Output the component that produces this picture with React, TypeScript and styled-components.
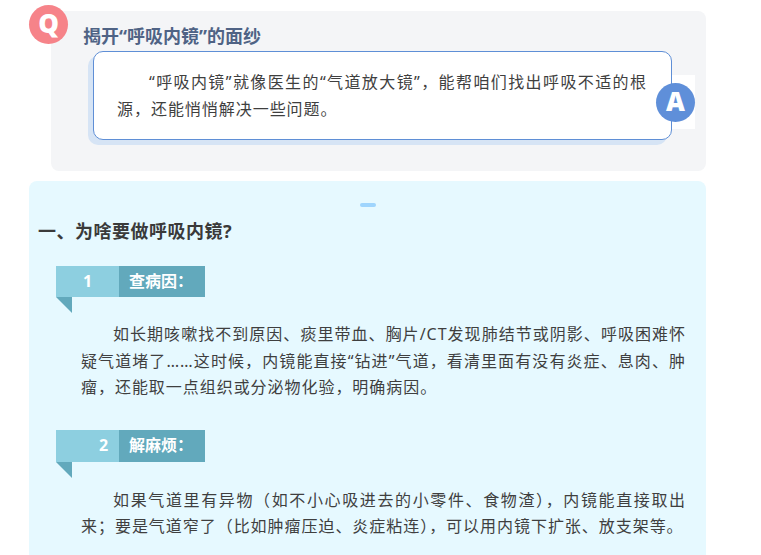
import React from 'react'
import styled, { createGlobalStyle } from 'styled-components'

const Global = createGlobalStyle`
  html, body {
    margin: 0;
    padding: 0;
    background: #fff;
    height: 555px;
    overflow: hidden;
  }
  body {
    font-family: "Noto Sans", "Noto Sans CJK SC", sans-serif;
  }
`

const Page = styled.div`
  width: 761px;
  height: 555px;
  overflow: hidden;
  padding: 11px 55px 0 29px;
  box-sizing: border-box;
  display: flex;
  flex-direction: column;
  gap: 10px;
`

const QuestionCard = styled.section`
  position: relative;
  flex-shrink: 0;
  margin-left: 22px;
  height: 160px;
  padding: 13px 34px 0 32px;
  box-sizing: border-box;
  background: #f4f5f7;
  border-radius: 8px;
`

const Badge = styled.div<{ $bg: string }>`
  position: absolute;
  width: 39px;
  height: 39px;
  border-radius: 50%;
  background: ${p => p.$bg};
  color: #fff;
  font-family: "Open Sans", "Liberation Sans", sans-serif;
  font-weight: 800;
  font-size: 26px;
  line-height: 36px;
  text-align: center;
`

const QBadge = styled(Badge)`
  left: -22px;
  top: -6px;
`

const ABadgeBack = styled.div`
  position: absolute;
  right: 11px;
  top: 64px;
  width: 23px;
  height: 54px;
  background: #fff;
`

const ABadge = styled(Badge)`
  right: 11px;
  top: 72px;
`

const QuestionTitle = styled.h2`
  margin: 0 0 2px;
  font-size: 18px;
  line-height: 25px;
  font-weight: 700;
  color: #4f6385;
`

const AnswerBox = styled.div`
  margin-left: 10px;
  height: 89px;
  box-sizing: border-box;
  padding: 17px 24px 0 23px;
  background: #fff;
  border: 1px solid #5f8fd6;
  border-radius: 10px;
  box-shadow: -5px 5px 0 #d6e4f5;
`

const Para = styled.p`
  margin: 0;
  font-size: 16px;
  line-height: 26.6px;
  letter-spacing: 0.96px;
  text-indent: 32px;
  text-align: justify;
  color: #3f3f3f;
`

const InfoCard = styled.section`
  flex: 1;
  padding: 22px 20px 0 9px;
  background: #e6f9ff;
  border-radius: 8px 8px 0 0;
`

const Pill = styled.div`
  width: 16px;
  height: 4px;
  margin: 0 auto 11px;
  position: relative;
  left: 5.5px;
  border-radius: 2px;
  background: #9fd5fd;
`

const Heading = styled.h3`
  margin: 0 0 22px;
  font-size: 18px;
  line-height: 26px;
  letter-spacing: 0.5px;
  font-weight: 700;
  color: #3a3a3a;
`

const Ribbon = styled.div<{ $height: number; $gap: number }>`
  position: relative;
  display: flex;
  width: 149px;
  height: ${p => p.$height}px;
  margin-left: 18px;
  margin-bottom: ${p => p.$gap}px;
  color: #fff;
  font-weight: 700;
  font-size: 16px;
  line-height: ${p => p.$height - 1}px;

  &::after {
    content: '';
    position: absolute;
    left: 0;
    top: 100%;
    border-top: 16px solid #62a9bc;
    border-left: 16px solid transparent;
  }
`

const RibbonNum = styled.div<{ $pad: number }>`
  width: 63px;
  box-sizing: border-box;
  padding-left: ${p => p.$pad}px;
  background: #8dcfe0;
`

const RibbonLabel = styled.div`
  flex: 1;
  padding-left: 10px;
  background: #62a9bc;
`

const Block = styled.div`
  margin-left: 43px;
`

const Item = styled.div`
  margin-bottom: 29px;
`

export default function App() {
  return (
    <Page>
      <Global />
      <QuestionCard>
        <QBadge $bg="#f68389">Q</QBadge>
        <QuestionTitle>揭开“呼吸内镜”的面纱</QuestionTitle>
        <AnswerBox>
          <Para>“呼吸内镜”就像医生的“气道放大镜”，能帮咱们找出呼吸不适的根源，还能悄悄解决一些问题。</Para>
        </AnswerBox>
        <ABadgeBack />
        <ABadge $bg="#5f8fd9">A</ABadge>
      </QuestionCard>
      <InfoCard>
        <Pill />
        <Heading>一、为啥要做呼吸内镜?</Heading>
        <Item>
          <Ribbon $height={31} $gap={24}>
            <RibbonNum $pad={27}>1</RibbonNum>
            <RibbonLabel>查病因：</RibbonLabel>
          </Ribbon>
          <Block>
            <Para>如长期咳嗽找不到原因、痰里带血、胸片/CT发现肺结节或阴影、呼吸困难怀疑气道堵了……这时候，内镜能直接“钻进”气道，看清里面有没有炎症、息肉、肿瘤，还能取一点组织或分泌物化验，明确病因。</Para>
          </Block>
        </Item>
        <Item>
          <Ribbon $height={32} $gap={25}>
            <RibbonNum $pad={43}>2</RibbonNum>
            <RibbonLabel>解麻烦：</RibbonLabel>
          </Ribbon>
          <Block>
            <Para>如果气道里有异物（如不小心吸进去的小零件、食物渣），内镜能直接取出来；要是气道窄了（比如肿瘤压迫、炎症粘连），可以用内镜下扩张、放支架等。</Para>
          </Block>
        </Item>
      </InfoCard>
    </Page>
  )
}
